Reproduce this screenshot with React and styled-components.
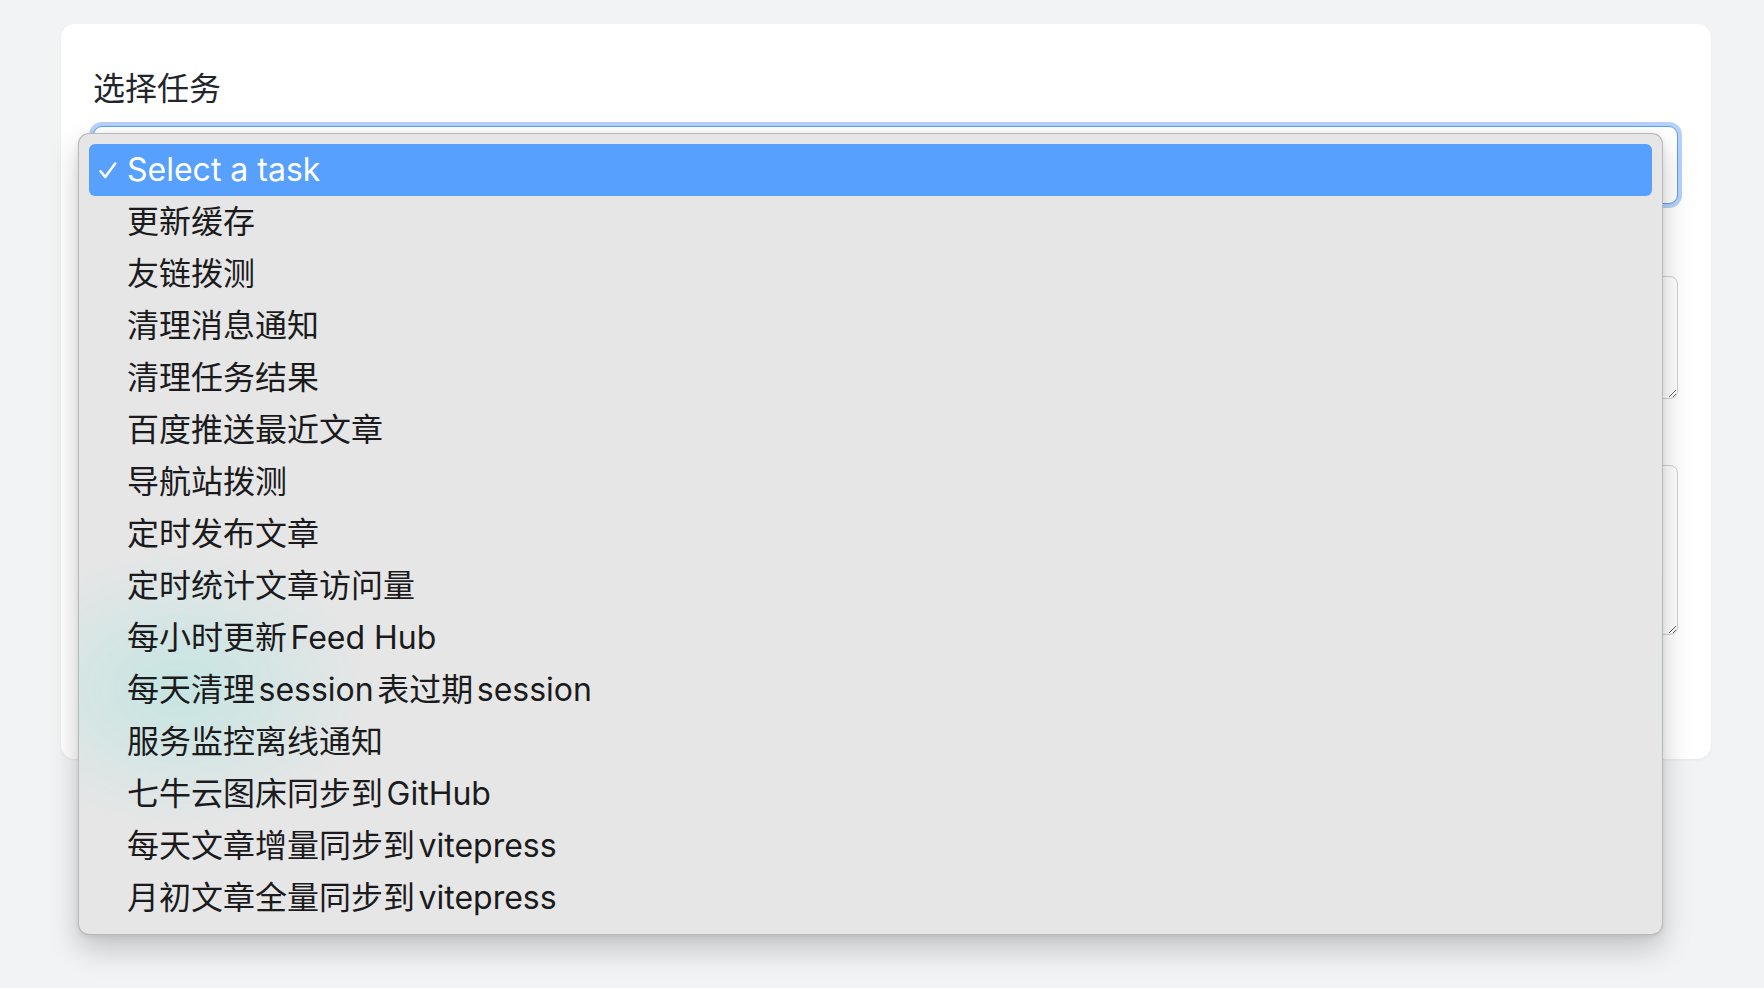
import React from "react";
import styled, { createGlobalStyle } from "styled-components";

const GlobalStyle = createGlobalStyle`
  html, body { margin: 0; padding: 0; }
  body {
    background: #f2f3f5;
    font-family: Inter, "Noto Sans CJK SC", "Noto Sans", sans-serif;
    color: #1f2329;
  }
  * { box-sizing: border-box; }
`;

const Page = styled.div`
  padding: 24px 53px 229px 61px;
`;

const Card = styled.div`
  background: #ffffff;
  border-radius: 14px;
  padding: 42px 33px 124px 32px;
  box-shadow: 0 1px 3px rgba(15, 23, 42, 0.05);
  display: flex;
  flex-direction: column;
`;

const Label = styled.label`
  font-size: 32px;
  line-height: 46px;
  color: #22262c;
  margin-bottom: 14px;
`;

const SelectWrap = styled.div`
  position: relative;
`;

const SelectBox = styled.div`
  height: 78px;
  border: 1px solid #5d9df2;
  border-radius: 9px;
  background: #ffffff;
  box-shadow: 0 0 0 4px rgba(110, 166, 245, 0.5);
`;

const TextArea = styled.textarea`
  display: block;
  width: 100%;
  height: ${(p) => p.$h}px;
  margin-top: ${(p) => p.$mt}px;
  border: 1px solid #cfd2d6;
  border-radius: 8px;
  background: #ffffff;
  font: inherit;
  font-size: 20px;
  padding: 12px 16px;
  resize: vertical;
  outline: none;
`;

const Menu = styled.ul`
  position: absolute;
  top: 7px;
  left: -15px;
  width: 100%;
  margin: 0;
  padding: 10px;
  list-style: none;
  background:
    radial-gradient(ellipse 190px 140px at 100px 555px, rgba(165, 228, 222, 0.5), rgba(165, 228, 222, 0) 100%),
    #e6e6e6;
  border: 1px solid rgba(0, 0, 0, 0.2);
  border-radius: 11px;
  box-shadow: 0 14px 30px rgba(0, 0, 0, 0.2), 0 2px 6px rgba(0, 0, 0, 0.08);
  z-index: 10;
`;

const Option = styled.li`
  height: 52px;
  display: flex;
  align-items: center;
  border-radius: 6px;
  font-size: 32px;
  line-height: 1;
  white-space: nowrap;
  color: ${(p) => (p.$selected ? "#ffffff" : "#1b1b1d")};
  background: ${(p) => (p.$selected ? "#58a0fd" : "transparent")};
`;

const CheckSlot = styled.span`
  width: 38px;
  flex: none;
  display: flex;
  align-items: center;
  padding-left: 10px;
`;

const Latin = styled.span`
  margin: 0 ${(p) => (p.$spaced ? "0.11em" : "0")};
`;

const Check = () => (
  <svg width="18" height="17" viewBox="0 0 18 17" fill="none">
    <path
      d="M1.6 9.2 L6.2 15 L16.2 1.6"
      stroke="#ffffff"
      strokeWidth="2.5"
      strokeLinecap="round"
      strokeLinejoin="round"
    />
  </svg>
);

const hasCJK = (s) => /[\u4e00-\u9fff]/.test(s);

const OptionText = ({ text }) => {
  if (!hasCJK(text)) return <span>{text}</span>;
  const parts = text.split(/([A-Za-z][A-Za-z ]*[A-Za-z]|[A-Za-z])/).filter(Boolean);
  return (
    <span>
      {parts.map((p, i) =>
        /[A-Za-z]/.test(p) ? (
          <Latin key={i} $spaced>
            {p}
          </Latin>
        ) : (
          <React.Fragment key={i}>{p}</React.Fragment>
        )
      )}
    </span>
  );
};

const options = [
  "Select a task",
  "更新缓存",
  "友链拨测",
  "清理消息通知",
  "清理任务结果",
  "百度推送最近文章",
  "导航站拨测",
  "定时发布文章",
  "定时统计文章访问量",
  "每小时更新Feed Hub",
  "每天清理session表过期session",
  "服务监控离线通知",
  "七牛云图床同步到GitHub",
  "每天文章增量同步到vitepress",
  "月初文章全量同步到vitepress",
];

export default function App() {
  return (
    <>
      <GlobalStyle />
      <Page>
        <Card>
          <Label>选择任务</Label>
          <SelectWrap>
            <SelectBox />
            <Menu role="listbox">
              {options.map((o, i) => (
                <Option key={o} $selected={i === 0} role="option">
                  <CheckSlot>{i === 0 && <Check />}</CheckSlot>
                  <OptionText text={o} />
                </Option>
              ))}
            </Menu>
          </SelectWrap>
          <TextArea $h={123} $mt={72} />
          <TextArea $h={170} $mt={66} />
        </Card>
      </Page>
    </>
  );
}
